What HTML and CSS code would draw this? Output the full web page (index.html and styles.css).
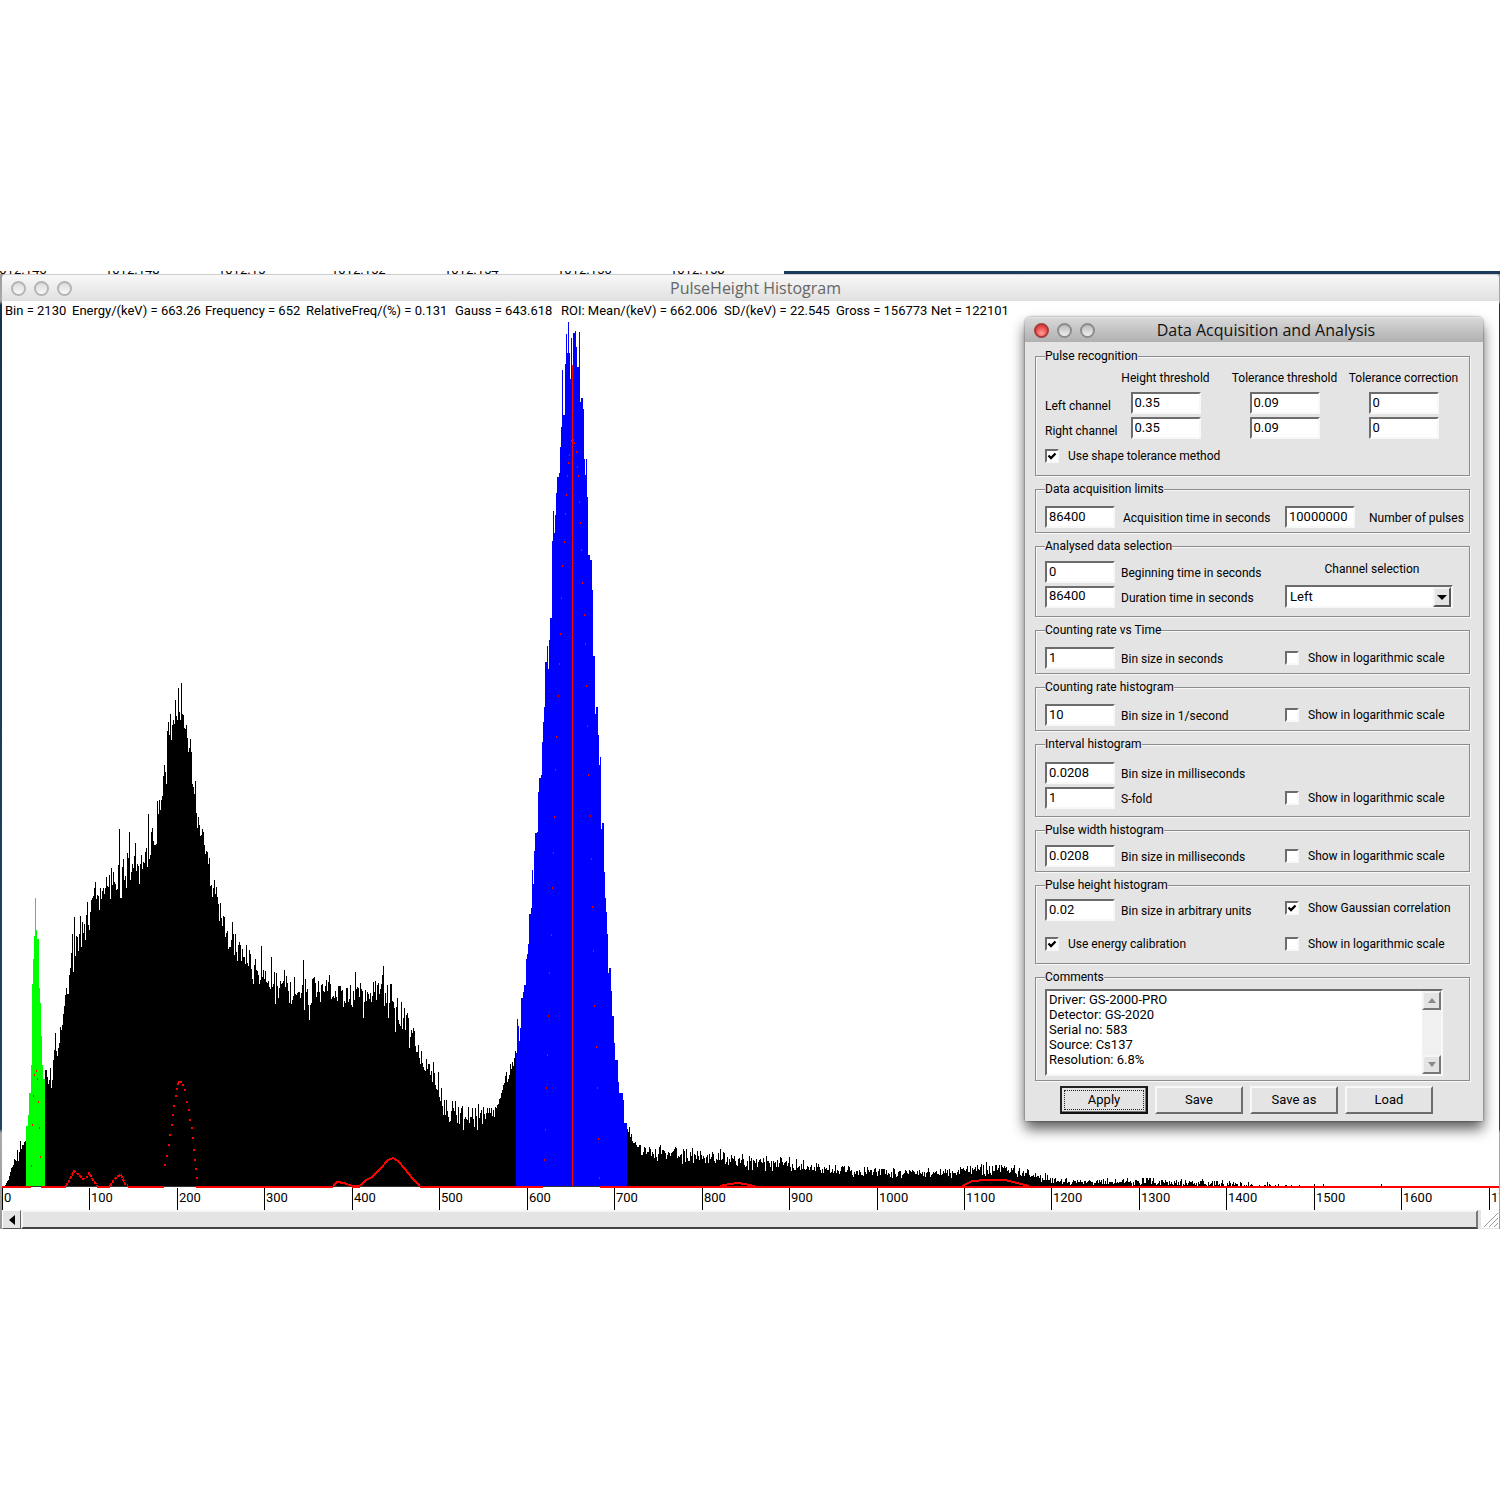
FILE: index.html
```html
<!DOCTYPE html>
<html lang="en">
<head>
<meta charset="utf-8">
<title>PulseHeight Histogram</title>
<link rel="stylesheet" href="styles.css">
</head>
<body>
<main class="desktop">
  <div class="backdrop">
    <div class="backdrop-axis"><span>1012.146</span><span>1012.148</span><span>1012.15</span><span>1012.152</span><span>1012.154</span><span>1012.156</span><span>1012.158</span></div>
  </div>

  <section class="window">
    <header class="titlebar">
      <div class="lights"><i></i><i></i><i></i></div>
      <h1>PulseHeight Histogram</h1>
    </header>
    <div class="readout">
      <span class="r-bin">Bin = 2130</span><span class="r-energy">Energy/(keV) = 663.26</span><span class="r-freq">Frequency = 652</span><span class="r-rel">RelativeFreq/(%) = 0.131</span><span class="r-gauss">Gauss = 643.618</span><span class="r-mean">ROI: Mean/(keV) = 662.006</span><span class="r-sd">SD/(keV) = 22.545</span><span class="r-gross">Gross = 156773</span><span>Net = 122101</span>
    </div>
    <svg class="plot" id="plot" role="img" aria-label="Pulse height spectrum"></svg>
    <div class="hscroll">
      <button class="step" type="button" aria-label="Scroll left"><svg width="6" height="10"><path d="M6 0V10L0 5Z"/></svg></button>
      <div class="thumb"></div>
      <svg class="grip" width="18" height="18"><path d="M3 17L17 3M8 17L17 8M13 17L17 13" stroke="#999" fill="none"/></svg>
    </div>
  </section>

  <form class="dialog">
    <header class="titlebar active">
      <div class="lights"><i class="close"></i><i></i><i></i></div>
      <h2>Data Acquisition and Analysis</h2>
    </header>
    <div class="groups">
      <fieldset class="recognition">
        <legend>Pulse recognition</legend>
        <div class="thresholds">
          <span></span><span class="head">Height threshold</span><span class="head">Tolerance threshold</span><span class="head">Tolerance correction</span>
          <label for="lh">Left channel</label><input id="lh" value="0.35"><input aria-label="Left tolerance threshold" value="0.09"><input aria-label="Left tolerance correction" value="0">
          <label for="rh">Right channel</label><input id="rh" value="0.35"><input aria-label="Right tolerance threshold" value="0.09"><input aria-label="Right tolerance correction" value="0">
        </div>
        <label class="check"><input type="checkbox" checked>Use shape tolerance method</label>
      </fieldset>

      <fieldset class="limits">
        <legend>Data acquisition limits</legend>
        <div class="pair">
          <label class="field"><input value="86400"><span>Acquisition time in seconds</span></label>
          <label class="field far"><input value="10000000"><span>Number of pulses</span></label>
        </div>
      </fieldset>

      <fieldset class="selection">
        <legend>Analysed data selection</legend>
        <div class="pair">
          <div class="stack">
            <label class="field"><input value="0"><span>Beginning time in seconds</span></label>
            <label class="field"><input value="86400"><span>Duration time in seconds</span></label>
          </div>
          <div class="channel">
            <label for="channel">Channel selection</label>
            <div class="combo">
              <select id="channel"><option>Left</option><option>Right</option></select>
              <span class="arrow"><svg width="10" height="5"><path d="M0 0H10L5 5Z"/></svg></span>
            </div>
          </div>
        </div>
      </fieldset>

      <fieldset>
        <legend>Counting rate vs Time</legend>
        <div class="pair">
          <label class="field"><input value="1"><span>Bin size in seconds</span></label>
          <label class="check"><input type="checkbox">Show in logarithmic scale</label>
        </div>
      </fieldset>

      <fieldset>
        <legend>Counting rate histogram</legend>
        <div class="pair">
          <label class="field"><input value="10"><span>Bin size in 1/second</span></label>
          <label class="check"><input type="checkbox">Show in logarithmic scale</label>
        </div>
      </fieldset>

      <fieldset class="interval">
        <legend>Interval histogram</legend>
        <div class="pair">
          <label class="field"><input value="0.0208"><span>Bin size in milliseconds</span></label>
          <span></span>
          <label class="field"><input value="1"><span>S-fold</span></label>
          <label class="check"><input type="checkbox">Show in logarithmic scale</label>
        </div>
      </fieldset>

      <fieldset class="width">
        <legend>Pulse width histogram</legend>
        <div class="pair">
          <label class="field"><input value="0.0208"><span>Bin size in milliseconds</span></label>
          <label class="check"><input type="checkbox">Show in logarithmic scale</label>
        </div>
      </fieldset>

      <fieldset class="height">
        <legend>Pulse height histogram</legend>
        <div class="pair">
          <label class="field"><input value="0.02"><span>Bin size in arbitrary units</span></label>
          <label class="check"><input type="checkbox" checked>Show Gaussian correlation</label>
          <label class="check"><input type="checkbox" checked>Use energy calibration</label>
          <label class="check"><input type="checkbox">Show in logarithmic scale</label>
        </div>
      </fieldset>

      <fieldset class="comments">
        <legend>Comments</legend>
        <div class="memo">
          <textarea aria-label="Comments" rows="5">Driver: GS-2000-PRO
Detector: GS-2020
Serial no: 583
Source: Cs137
Resolution: 6.8%</textarea>
          <div class="vscroll">
            <button type="button" aria-label="Scroll up"><svg width="8" height="5"><path d="M0 5H8L4 0Z"/></svg></button>
            <button type="button" aria-label="Scroll down"><svg width="8" height="5"><path d="M0 0H8L4 5Z"/></svg></button>
          </div>
        </div>
      </fieldset>
    </div>
    <footer class="actions">
      <button class="default" type="button">Apply</button>
      <button type="button">Save</button>
      <button type="button">Save as</button>
      <button type="button">Load</button>
    </footer>
  </form>
</main>
<script src="chart.js"></script>
</body>
</html>
```
FILE: styles.css
```css
* { box-sizing: border-box; }

body {
  margin: 0;
  background: #fff;
  color: #000;
  font: 13px/16px Roboto, "Liberation Sans", sans-serif;
}

.desktop {
  position: relative;
  margin-top: 271px;
  padding: 0 1px 0 2px;
  background: linear-gradient(#999 0, #aaa 30px, #16324f 34px, #1f4468 858px, #aaa 862px, #999);
}

.backdrop {
  display: flex;
  height: 3px;
  margin: 0 -1px 0 -2px;
  overflow: hidden;
  background: #1c3a5c;
}
.backdrop-axis {
  display: flex;
  align-items: flex-end;
  width: 784px;
  background: #fff;
  line-height: 8px;
}
.backdrop-axis span { flex: 0 0 113px; }
.backdrop-axis span:first-child { margin-left: -8px; }

.window {
  display: flex;
  flex-direction: column;
  background: #fff;
  border-radius: 4px 4px 0 0;
}

.titlebar {
  position: relative;
  display: flex;
  align-items: center;
  justify-content: center;
  height: 27px;
  border-top: 1px solid #ccc;
  border-radius: 4px 4px 0 0;
  background: linear-gradient(#f8f8f8, #e0e0e0);
  color: #666;
}
.titlebar h1, .titlebar h2 {
  margin: 0;
  padding-left: 10px;
  font: 16px/20px "Open Sans", "Noto Sans", sans-serif;
}
.lights {
  position: absolute;
  left: 9px;
  display: flex;
  gap: 8px;
}
.lights i {
  width: 15px;
  height: 15px;
  border: 2px solid #b4b4b4;
  border-radius: 50%;
  background: linear-gradient(#dcdcdc, #f8f8f8);
}
.titlebar.active {
  height: 25px;
  border-top-color: #e4e4e4;
  background: linear-gradient(#d8d8d8, #b0b0b0);
  color: #111;
}
.titlebar.active h2 { padding-left: 24px; }
.active .lights i { border-color: #8c8c8c; background: linear-gradient(#bbb, #eee); }
.active .lights i.close { border-color: #a23c3c; background: radial-gradient(circle at 50% 75%, #ff9c98, #e8403f 70%); }

.readout {
  display: flex;
  height: 20px;
  padding-left: 3px;
  line-height: 20px;
  white-space: nowrap;
}
.readout span { flex: none; }
.r-bin { width: 67px; }
.r-energy { width: 133px; }
.r-freq { width: 101px; }
.r-rel { width: 149px; }
.r-gauss { width: 106px; }
.r-mean { width: 163px; }
.r-sd { width: 112px; }
.r-gross { width: 95px; }

.plot {
  display: block;
  width: 100%;
  height: 889px;
  shape-rendering: crispEdges;
}

.hscroll {
  display: flex;
  height: 19px;
  background: #e4e4e4;
}
.step {
  display: flex;
  align-items: center;
  justify-content: center;
  width: 19px;
  padding: 0;
  border: 1px solid;
  border-color: #fff #666 #555 #fff;
  background: #e4e4e4;
}
.thumb {
  flex: 1;
  border: 2px solid;
  border-color: #f6f6f6 #777 #444 #f6f6f6;
}
.grip { margin-left: 3px; background: #fff; }

.dialog {
  position: absolute;
  top: 46px;
  right: 17px;
  width: 458px;
  padding-bottom: 7px;
  border-radius: 5px 5px 0 0;
  background: #e4e4e4;
  box-shadow: 0 0 2px rgba(0, 0, 0, .6), 0 8px 14px rgba(0, 0, 0, .65);
}

.groups {
  display: flex;
  flex-direction: column;
  gap: 5px;
  padding: 6px 13px 0 10px;
  font-size: 12px;
}

fieldset {
  min-width: 0;
  margin: 0;
  padding: 9px 6px 4px 9px;
  border: 1px solid #8c8c8c;
  box-shadow: 1px 1px #f8f8f8, inset 1px 1px #f8f8f8;
}
fieldset > * { white-space: nowrap; }
legend { padding: 0; background: #e4e4e4; line-height: 16px; }

fieldset.recognition { padding-top: 1px; }
fieldset.selection { padding-top: 7px; padding-bottom: 8px; }
fieldset.interval { padding-top: 10px; padding-bottom: 7px; }
fieldset.width { padding-top: 7px; }
fieldset.height { padding-top: 6px; padding-bottom: 10px; }
fieldset.comments { padding-top: 4px; }

.thresholds {
  display: grid;
  grid-template-columns: 61px repeat(3, 1fr);
  grid-template-rows: 26px 22px 22px;
  row-gap: 3px;
  justify-items: center;
  margin-top: -2px;
}
.thresholds label { justify-self: start; padding-top: 6px; }
.head { line-height: 30px; }

input:not([type]), select, .memo {
  border: 2px solid;
  border-color: #6c6c6c #f8f8f8 #f8f8f8 #6c6c6c;
  border-radius: 0;
  background: #fff;
  color: #000;
  font: inherit;
  font-size: 13px;
  outline: 0;
}
input:not([type]) {
  flex: none;
  width: 70px;
  height: 22px;
  padding: 0 2px 2px;
}

.pair {
  display: grid;
  grid-template-columns: 240px 1fr;
  row-gap: 3px;
}
.field { display: flex; gap: 6px; }
.field span { padding-top: 4px; }
.limits .field { gap: 8px; }
.limits .field.far { gap: 14px; }
.stack { display: grid; row-gap: 2px; }

.check {
  display: flex;
  align-items: center;
  gap: 9px;
  min-height: 22px;
}
.recognition .check { height: 32px; padding-top: 2px; }
.height .check { align-self: start; min-height: 18px; }
.height .pair { row-gap: 14px; }

input[type="checkbox"] {
  appearance: none;
  flex: none;
  width: 14px;
  height: 14px;
  margin: 0;
  border: 2px solid;
  border-color: #6c6c6c #f8f8f8 #f8f8f8 #6c6c6c;
  background: #fff;
}
input[type="checkbox"]:checked {
  background: #fff url("data:image/svg+xml,%3Csvg xmlns='http://www.w3.org/2000/svg' viewBox='0 0 10 10'%3E%3Cpath d='M1.500 4.500L4 7L8.500 2.500' fill='none' stroke='black' stroke-width='2.300'/%3E%3C/svg%3E") center / 10px 10px no-repeat;
}

.channel { width: 168px; }
.channel label { display: block; padding-left: 6px; text-align: center; line-height: 16px; }
.combo { position: relative; margin-top: 8px; }
select {
  appearance: none;
  display: block;
  width: 100%;
  height: 23px;
  padding: 0 3px;
}
.arrow {
  position: absolute;
  top: 2px;
  right: 2px;
  display: flex;
  align-items: center;
  justify-content: center;
  width: 18px;
  height: 20px;
  border: 2px solid;
  border-color: #f4f4f4 #555 #555 #f4f4f4;
  background: #e4e4e4;
  pointer-events: none;
}

.memo { display: flex; width: 398px; height: 87px; }
.memo textarea {
  flex: 1;
  padding: 1px 2px;
  border: 0;
  background: none;
  font: inherit;
  line-height: 15px;
  resize: none;
  overflow: hidden;
  outline: 0;
}
.vscroll {
  display: flex;
  flex-direction: column;
  justify-content: space-between;
  width: 19px;
  background: #f0f0f0;
}
.vscroll button {
  display: flex;
  align-items: center;
  justify-content: center;
  height: 19px;
  padding: 0;
  border: 2px solid;
  border-color: #f4f4f4 #777 #777 #f4f4f4;
  background: #e4e4e4;
  fill: #888;
}

.actions {
  display: flex;
  gap: 7px;
  padding: 5px 0 0 35px;
}
.actions button {
  width: 88px;
  height: 28px;
  padding: 0;
  border: 2px solid;
  border-color: #f8f8f8 #6c6c6c #6c6c6c #f8f8f8;
  background: #e4e4e4;
  color: #000;
  font: inherit;
}
.actions .default {
  border-color: #222 #111 #111 #222;
  outline: 1px dotted #222;
  outline-offset: -5px;
  box-shadow: inset -1px -1px #777;
}
```
FILE: chart.js
```js
const BASE = 1186;
const svg = document.getElementById("plot");
const NS = "http://www.w3.org/2000/svg";
const root = document.createElementNS(NS, "g");
root.setAttribute("transform", "translate(-2 -321)");
svg.append(root);

function add(tag, attrs, text) {
  const node = document.createElementNS(NS, tag);
  for (const key in attrs) node.setAttribute(key, attrs[key]);
  if (text !== undefined) node.textContent = text;
  root.append(node);
}

let seed = 20;
function random() {
  seed = (seed * 1664525 + 1013904223) % 4294967296;
  return seed / 4294967296;
}

function level(points, x) {
  let i = 1;
  while (i < points.length - 1 && points[i][0] < x) i++;
  const [x0, y0, n0] = points[i - 1];
  const [x1, y1, n1] = points[i];
  const t = (x - x0) / (x1 - x0);
  return [y0 + (y1 - y0) * t, (n0 || 0) + ((n1 || 0) - (n0 || 0)) * t];
}

// Continuum: x, mean level, spread
const continuum = [[5,1186,1],[12,1165,4],[17,1155,6],[22,1145,8],[26,1130,6],[44,1078,8],[50,1080,12],[56,1055,10],[62,1025,10],[66,1002,12],[70,975,18],[74,948,22],[78,932,26],[84,922,22],[90,908,16],[100,895,16],[110,886,16],[120,878,20],[130,870,20],[140,862,16],[150,847,12],[156,832,14],[161,800,12],[166,768,20],[171,740,22],[176,724,22],[181,714,16],[185,730,12],[190,755,14],[195,808,10],[200,832,12],[207,862,16],[213,888,16],[220,915,10],[227,940,10],[235,946,10],[245,956,14],[255,972,12],[265,974,16],[275,979,18],[290,987,16],[305,992,18],[320,993,18],[335,992,12],[350,993,14],[365,995,14],[380,992,18],[390,1000,20],[400,1018,18],[410,1032,14],[420,1060,12],[430,1072,14],[440,1098,12],[450,1110,12],[460,1116,12],[480,1118,10],[490,1112,8],[497,1106,8],[504,1085,8],[510,1070,6],[516,1055,6]];
const tail = [[627,1126,6],[632,1143,7],[640,1149,7],[660,1152,8],[680,1154,8],[700,1158,7],[725,1158,7],[745,1161,7],[770,1163,6],[800,1166,6],[830,1170,5],[860,1171,5],[900,1172,5],[930,1173,5],[960,1171,5],[985,1169,6],[1003,1168,6],[1015,1171,5],[1035,1175,5],[1050,1179,4],[1070,1182,3],[1110,1182,3],[1150,1182,4],[1200,1183,3],[1240,1185,4],[1280,1186,2],[1310,1187,1]];
const spikes = {50:1068,55:1033,65:995,69:975,72:934,74:917,80:916,94:888,106:877,119:829,129:832,135:843,148:814,152:828,157:801,164:765,167:731,168:722,170:714,173:720,175:700,178:688,181:683,183:715,190:739,195:781,203:832,209:858,214:880,232:922,235:934,246:945,261:946,271:957,303:960,309:1020,275:1004,355:972,363:1018,383:966,390:984,404:1008,413:1028,433:1062,438:1072};

let path = "";
function bars(points, from, to) {
  for (let x = from; x < to; x++) {
    const [mean, spread] = level(points, x);
    const y = Math.round(spikes[x] || mean + 1.4 * spread * (random() + random() - 1));
    if (y < BASE) path += `M${x} ${BASE}V${y}h1V${BASE}Z`;
  }
}
bars(continuum, 5, 26);
bars(continuum, 44, 516);
bars(tail, 627, 1310);
for (const x of [1314, 1323, 1381]) path += `M${x} ${BASE}v-2h1v2Z`;
add("path", { d: path });

function steps(points, end, fill) {
  let d = `M${points[0][0]} ${BASE}`;
  points.forEach(([x, y], i) => {
    d += `V${y}H${i + 1 < points.length ? points[i + 1][0] : end}`;
  });
  add("path", { d: d + `V${BASE}Z`, fill });
}
steps([[26,1126],[28,1115],[29,1093],[31,1065],[32,984],[33,959],[34,936],[35,898],[36,930],[37,939],[39,988],[40,1003],[41,1036],[42,1065],[43,1079]], 45, "#0f0");
steps([[516,1053],[517,1019],[518,1026],[519,1041],[520,1028],[521,998],[523,992],[524,985],[526,959],[527,954],[528,944],[529,914],[531,908],[532,870],[533,884],[534,851],[535,833],[537,832],[538,792],[539,778],[541,775],[542,742],[543,722],[544,707],[545,662],[547,646],[548,669],[549,640],[550,618],[552,541],[553,511],[554,533],[555,515],[556,493],[557,477],[559,473],[560,447],[561,427],[562,370],[563,415],[565,364],[566,334],[567,353],[568,322],[569,353],[570,379],[571,338],[572,365],[573,333],[575,331],[576,347],[577,367],[578,367],[579,332],[580,402],[581,398],[583,409],[584,459],[585,475],[586,459],[587,497],[588,555],[590,560],[592,590],[593,656],[595,714],[596,707],[598,735],[599,765],[600,757],[601,829],[602,823],[604,872],[605,898],[606,912],[607,934],[608,973],[609,968],[611,991],[612,1016],[614,1043],[615,1060],[618,1082],[619,1093],[623,1100],[624,1123]], 627, "#00f");

add("rect", { x: 572, y: 365, width: 1, height: BASE - 365, fill: "#f00" });

// Gaussian correlation samples
const dots = [[36,1071],[34,1075],[37,1079],[33,1096],[38,1102],[32,1125],[39,1128],[40,1157],[31,1166],
  [164,1165],[166,1156],[168,1145],[169,1135],[171,1125],[172,1115],[173,1106],[175,1096],[176,1089],[177,1084],[178,1082],[180,1082],[182,1085],[184,1090],[186,1102],[188,1110],[189,1120],[191,1128],[192,1138],[193,1150],[194,1160],[195,1169],[196,1178],
  [571,441],[573,440],[574,443],[576,452],[569,455],[568,463],[577,467],[567,476],[578,476],[566,495],[579,502],[565,514],[580,523],[564,542],[581,550],[562,566],[582,583],[561,598],[584,615],[560,634],[585,644],[559,664],[586,686],[558,696],[587,726],[556,737],[588,775],[555,770],[590,816],[554,817],[591,859],[553,853],[592,907],[552,888],[593,951],[551,935],[594,1006],[549,973],[596,1047],[548,1016],[597,1088],[547,1055],[598,1139],[546,1088],[599,1178],[545,1130],[544,1160]];
add("path", { d: dots.map(([x, y]) => `M${x} ${y - 1}h${x > 160 && x < 200 ? 2 : 1}v2h-${x > 160 && x < 200 ? 2 : 1}Z`).join(""), fill: "#f00" });

// Correlation curve on the continuum and the baseline between its peaks
const curves = [
  "66,1186 69,1181 74,1171 79,1175 83,1179 87,1177 89,1173 92,1178 97,1186",
  "110,1186 114,1180 118,1176 121,1175 125,1184 128,1186"
];
for (const points of curves) add("polyline", { points, fill: "none", stroke: "#f00", "stroke-width": 2, "stroke-dasharray": "3 1" });
for (const points of [
  "333,1186 337,1182 344,1183 352,1186 360,1186 366,1180 372,1177 380,1169 388,1160 393,1158 398,1161 405,1169 412,1178 420,1186",
  "720,1186 729,1184 739,1183 744,1184 755,1186",
  "962,1186 972,1181 986,1180 1005,1180 1017,1183 1029,1186"
]) add("polyline", { points, fill: "none", stroke: "#f00", "stroke-width": 2 });
add("path", { d: "M26 1186H627", stroke: "#333" });
add("path", { d: "M2 1187H31M41 1187H66M97 1187H110M128 1187H164M196 1187H333M352 1187H360M420 1187H543M600 1187H3000", stroke: "#f00", "stroke-width": 2 });

for (let i = 0; i < 30; i++) {
  const x = Math.round(2 + i * 87.45);
  add("rect", { x, y: 1188, width: 1, height: 22 });
  add("text", { x: x + 2, y: 1202, "font-size": 13 }, String(i * 100));
}
```
